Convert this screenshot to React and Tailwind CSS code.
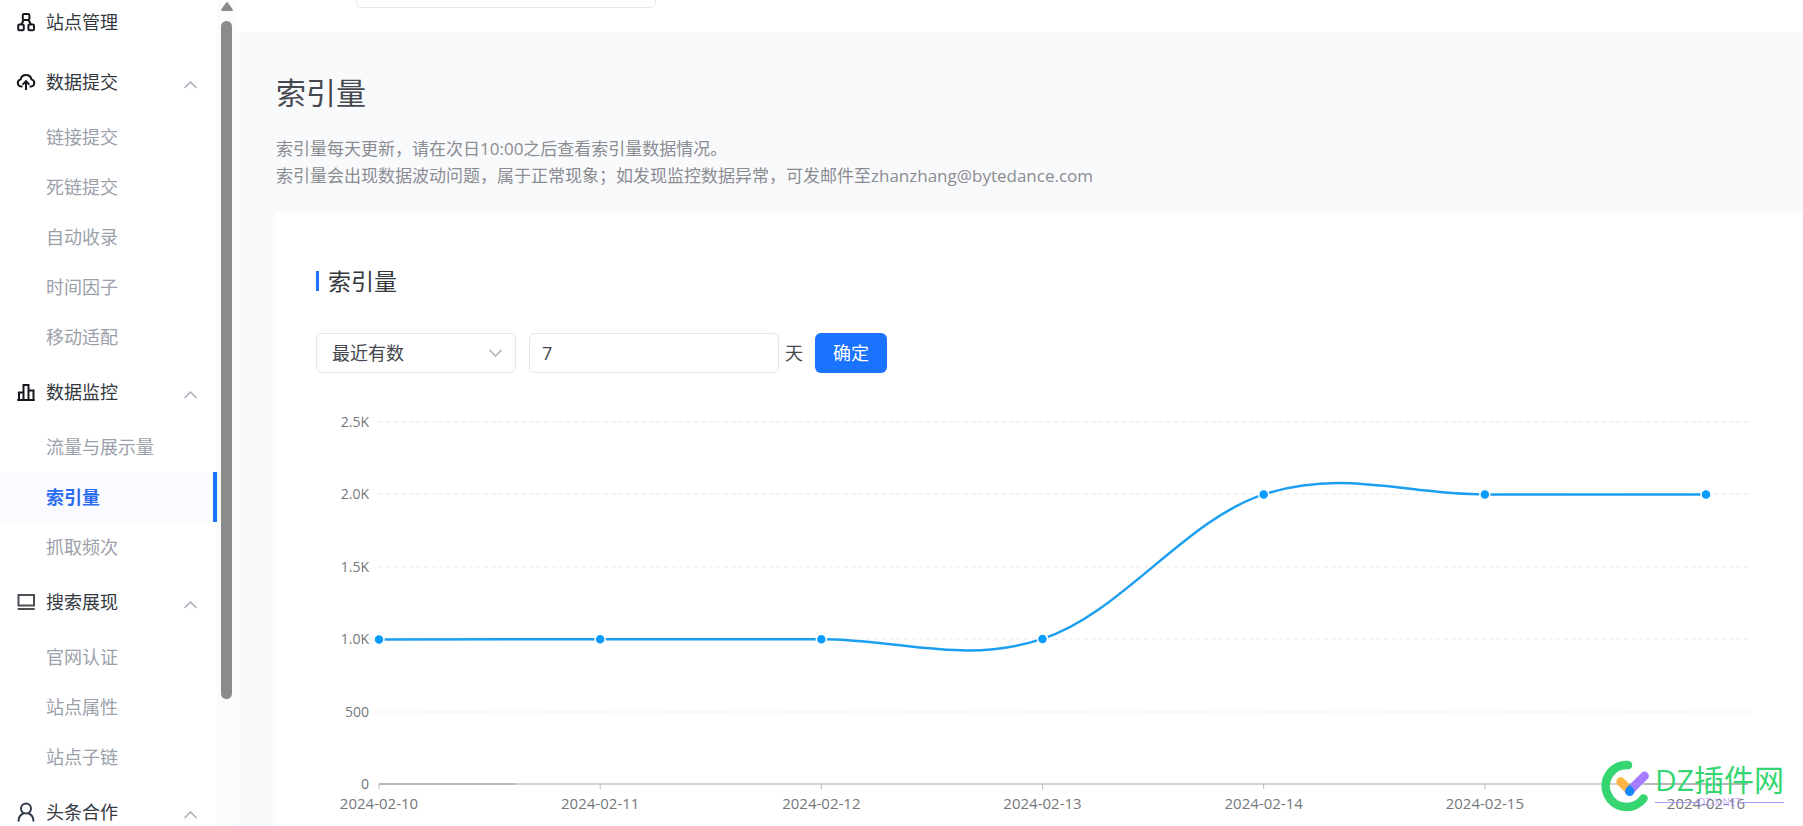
import { useLayoutEffect, useRef, useState } from "react";

const FONT = "font-['Open_Sans','Noto_Sans_CJK_SC',sans-serif]";

function SiteIcon() {
  return (
    <svg width="20" height="20" viewBox="0 0 20 20" fill="none" stroke="#15181d" strokeWidth="2">
      <rect x="6.800" y="2" width="6.600" height="6" rx="1.200" />
      <rect x="2.200" y="12.500" width="5.600" height="5.700" rx="1.200" />
      <rect x="12.400" y="12.500" width="5.600" height="5.700" rx="1.200" />
      <path d="M7.600 8 5.400 12.500M12.600 8 14.800 12.500" />
    </svg>
  );
}

function CloudIcon() {
  return (
    <svg width="20" height="20" viewBox="0 0 20 20" fill="none" stroke="#15181d" strokeWidth="2">
      <path d="M6.500 14.500H5.200a3.600 3.600 0 0 1-.6-7.100 5.600 5.600 0 0 1 10.900 0 3.600 3.600 0 0 1-.6 7.100h-1.400" />
      <path d="M10 18V9.500M6.600 12.600 10 9.200l3.400 3.400" />
    </svg>
  );
}

function BarsIcon() {
  return (
    <svg width="20" height="20" viewBox="0 0 20 20" fill="none" stroke="#15181d" strokeWidth="2">
      <path d="M1.200 18h17.600M3 18v-7.500h4.500M7.500 18V3h5v15M12.500 8.500H17.500V18" />
    </svg>
  );
}

function ScreenIcon() {
  return (
    <svg width="20" height="20" viewBox="0 0 20 20" fill="none" stroke="#4b4f55" strokeWidth="2">
      <rect x="2.500" y="3" width="15.500" height="10.500" />
      <path d="M1.700 17h17" />
    </svg>
  );
}

function UserIcon() {
  return (
    <svg width="20" height="20" viewBox="0 0 20 20" fill="none" stroke="#2f3a4a" strokeWidth="2">
      <circle cx="10" cy="6.500" r="5" />
      <path d="M2.500 19.500c0-4 2.400-7 5-8M17.500 19.500c0-4-2.400-7-5-8" />
    </svg>
  );
}

function Chevron({ up }) {
  return (
    <svg width="13" height="8" viewBox="0 0 13 8" fill="none" stroke="#a9afb8" strokeWidth="1.500">
      <path d={up ? "M.5 7 6.500 1l6 6" : "M.5 1l6 6 6-6"} />
    </svg>
  );
}

const MENU = [
  { label: "站点管理", Icon: SiteIcon },
  { label: "数据提交", Icon: CloudIcon, items: ["链接提交", "死链提交", "自动收录", "时间因子", "移动适配"] },
  { label: "数据监控", Icon: BarsIcon, items: ["流量与展示量", "索引量", "抓取频次"] },
  { label: "搜索展现", Icon: ScreenIcon, items: ["官网认证", "站点属性", "站点子链"] },
  { label: "头条合作", Icon: UserIcon, items: [] },
];

function Sidebar() {
  return (
    <aside className="flex w-[236px] shrink-0 overflow-hidden bg-white">
      <nav className="-mt-2 flex min-w-0 flex-1 flex-col text-lg">
        {MENU.map(({ label, Icon, items }) => (
          <section key={label}>
            <button type="button" className="flex h-[60px] w-full items-center gap-2.5 pr-5 pl-4 text-[#343940]">
              <Icon />
              <span className="flex-1 text-left">{label}</span>
              {items && (
                <span className="pt-1.5">
                  <Chevron up />
                </span>
              )}
            </button>
            {items?.map((item) =>
              item === "索引量" ? (
                <a key={item} href="#index" aria-current="page" className="flex h-[50px] items-center border-r-4 border-[#1a73ff] bg-[#f9fbfe] pl-[46px] font-bold text-[#2b6cf0]">
                  {item}
                </a>
              ) : (
                <a key={item} href="#item" className="flex h-[50px] items-center pl-[46px] text-[#9ba1aa]">
                  {item}
                </a>
              ),
            )}
          </section>
        ))}
      </nav>
      <div className="flex w-[19px] shrink-0 flex-col items-center gap-2.5 bg-[#fbfbfb] pt-0.5">
        <svg width="12" height="9" viewBox="0 0 12 9" fill="#8b8b8b">
          <path d="M5 .8a1.200 1.200 0 0 1 2 0l4.600 6.400A1.100 1.100 0 0 1 10.700 9H1.300A1.100 1.100 0 0 1 .4 7.200z" />
        </svg>
        <div className="h-[678px] w-[11px] rounded-full bg-[#8b8b8b]" />
      </div>
    </aside>
  );
}

const DATA = [
  ["2024-02-10", 998],
  ["2024-02-11", 1000],
  ["2024-02-12", 1000],
  ["2024-02-13", 1002],
  ["2024-02-14", 2000],
  ["2024-02-15", 2000],
  ["2024-02-16", 2000],
];
const TICKS = [
  [2500, "2.5K"],
  [2000, "2.0K"],
  [1500, "1.5K"],
  [1000, "1.0K"],
  [500, "500"],
  [0, "0"],
];
const LEFT = 63;
const TOP = 16;
const PLOT = 362;
const SMOOTH = 0.179;

function smoothPath(points) {
  const tangent = points.map((_, i) => {
    const a = points[i - 1];
    const b = points[i + 1];
    return a && b ? [(b[0] - a[0]) * SMOOTH, (b[1] - a[1]) * SMOOTH] : [0, 0];
  });
  return points.reduce((d, [x, y], i) => {
    if (i === 0) return `M${x} ${y}`;
    const [px, py] = points[i - 1];
    const [ptx, pty] = tangent[i - 1];
    const [tx, ty] = tangent[i];
    return `${d}C${px + ptx} ${py + pty} ${x - tx} ${y - ty} ${x} ${y}`;
  }, "");
}

function IndexChart() {
  const box = useRef(null);
  const [width, setWidth] = useState(1432);
  useLayoutEffect(() => {
    const update = () => setWidth(box.current.clientWidth);
    update();
    const observer = new ResizeObserver(update);
    observer.observe(box.current);
    return () => observer.disconnect();
  }, []);

  const right = width;
  const step = (right - LEFT - 42) / (DATA.length - 1);
  const yOf = (v) => TOP + PLOT * (1 - v / 2500);
  const points = DATA.map(([, v], i) => [LEFT + i * step, yOf(v)]);

  return (
    <div ref={box} className="w-full">
      <svg width={width} height="430" className="block" role="img" aria-label="索引量">
        {TICKS.map(([v, label]) => (
          <g key={v}>
            {v > 0 && (
              <line x1={LEFT} x2={right} y1={Math.round(yOf(v))} y2={Math.round(yOf(v))} stroke="#e8e9eb" strokeDasharray="4 3.500" />
            )}
            <text x={LEFT - 10} y={yOf(v) + 5} textAnchor="end" fontSize="14" fill="#74777c">
              {label}
            </text>
          </g>
        ))}
        <path d={`M${LEFT} ${TOP + PLOT}H${right}`} stroke="#d4d4d4" strokeWidth="2" />
        <path d={`M${LEFT} ${TOP + PLOT}h136M${right - 104} ${TOP + PLOT}H${right}`} stroke="#b8b8b8" strokeWidth="2" />
        {points.map(([x], i) => (
          <g key={DATA[i][0]}>
            <path d={`M${x} ${TOP + PLOT}v5`} stroke="#b9b9b9" />
            <text x={x} y={TOP + PLOT + 25} textAnchor="middle" fontSize="15" fill="#74777c">
              {DATA[i][0]}
            </text>
          </g>
        ))}
        <path d={smoothPath(points)} fill="none" stroke="#1b9ff0" strokeWidth="2.500" />
        {points.map(([x, y]) => (
          <circle key={x} cx={x} cy={y} r="5" fill="#0a9bff" stroke="#fff" strokeWidth="1.500" />
        ))}
      </svg>
    </div>
  );
}

function Watermark() {
  return (
    <div className="absolute right-[19px] bottom-[14px] flex items-start gap-1.5">
      <svg width="48" height="52" viewBox="0 0 48 52" fill="none" strokeLinecap="round">
        <path d="M27 5A21 21 0 1 0 42.500 38.500" stroke="#35d671" strokeWidth="8.600" />
        <path d="M19.700 21.700l9 9" stroke="#fdb643" strokeWidth="8.800" />
        <path d="M28.700 30.700 43.500 16" stroke="#a77dff" strokeWidth="8.800" />
        <path d="M28.700 24.800l3.500 3.400a4.700 4.700 0 1 1-7 0z" fill="#1787fb" />
      </svg>
      <div className="flex flex-col pt-[3px]">
        <span className="text-3xl leading-[33px] text-[#35d671]">DZ插件网</span>
        <span className="flex items-center text-[10px] leading-3 text-[#a77dff]/70">
          <i className="h-px flex-1 bg-[#a996f5]" />
          DZ-X.NET
          <i className="h-px flex-1 bg-[#a996f5]" />
        </span>
      </div>
    </div>
  );
}

export default function App() {
  return (
    <div className={`relative flex h-screen overflow-hidden bg-[#f9fafc] ${FONT}`}>
      <Sidebar />
      <main className="min-w-0 flex-1 overflow-hidden">
        <header className="flex h-8 items-start bg-white pl-[120px]">
          <input aria-label="站点" className="-mt-8 h-10 w-[300px] rounded-md border border-[#e5e6eb] bg-white px-3" />
        </header>
        <div className="pl-10">
          <h1 className="pt-[39px] text-3xl leading-[44px] text-[#45484d]">索引量</h1>
          <p className="pt-5 text-[17px] leading-[27px] text-[#8a8c91]">
            索引量每天更新，请在次日10:00之后查看索引量数据情况。
            <br />
            索引量会出现数据波动问题，属于正常现象；如发现监控数据异常，可发邮件至zhanzhang@bytedance.com
          </p>
          <section className="mt-6 bg-white pt-[50px] pr-[55px] pl-10">
            <h2 className="flex items-center gap-[9px] text-[23px] leading-[36px] text-[#34373c]">
              <span className="h-5 w-[3px] bg-[#1a73ff]" />
              索引量
            </h2>
            <form className="flex items-center pt-[34px] text-lg text-[#43474d]" onSubmit={(e) => e.preventDefault()}>
              <div className="relative mr-[13px] w-[200px]">
                <select aria-label="时间范围" className="h-10 w-full appearance-none rounded-md border border-[#e5e6eb] bg-white px-[15px]">
                  <option>最近有数</option>
                </select>
                <span className="pointer-events-none absolute inset-y-0 right-3.5 flex items-center">
                  <Chevron />
                </span>
              </div>
              <input id="days" defaultValue="7" className="h-10 w-[250px] rounded-md border border-[#e5e6eb] bg-white px-3" />
              <label htmlFor="days" className="px-1.5">天</label>
              <button type="submit" className="ml-1.5 h-10 w-[72px] rounded-md bg-[#1a73ff] text-white">确定</button>
            </form>
            <div className="pt-[33px]">
              <IndexChart />
            </div>
          </section>
        </div>
      </main>
      <Watermark />
    </div>
  );
}
